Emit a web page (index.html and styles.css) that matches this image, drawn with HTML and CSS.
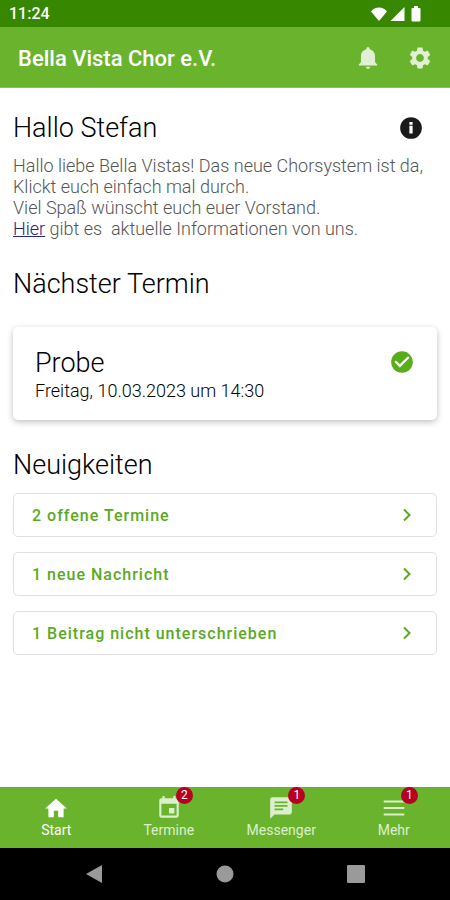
FILE: index.html
```html
<!DOCTYPE html>
<html lang="de">

<head>
    <meta charset="UTF-8">
    <meta name="viewport" content="width=device-width, initial-scale=1.0">
    <title>Bella Vista Chor e.V.</title>
    <link rel="stylesheet" href="styles.css">
</head>

<body>
    <!-- Status bar -->
    <div class="status-bar">
        <span class="time">11:24</span>
        <div class="status-icons">
            <svg width="18" height="16" viewBox="0 0 18 16"><path d="M9 15 1 5.500C3 3 6 1.500 9 1.500s6 1.500 8 4z" /></svg>
            <svg width="15" height="16" viewBox="0 0 15 16"><path d="M14.500 1v14H.5z" /></svg>
            <svg width="10" height="16" viewBox="0 0 10 16"><path d="M3 0h4v2h1.500q1 0 1 1v11q0 1.500-1 1.500h-7q-1 0-1-1.500V3q0-1 1-1H3z" /></svg>
        </div>
    </div>

    <!-- App bar -->
    <header class="app-bar">
        <div class="app-title">Bella Vista Chor e.V.</div>
        <button class="icon-button" aria-label="Benachrichtigungen">
            <svg width="26" height="26" viewBox="0 0 24 24"><path d="M12 22c1.100 0 2-.9 2-2h-4c0 1.100.9 2 2 2zm6.500-6v-5.500c0-3.200-1.900-5.800-5-6.500V3.300c0-.8-.7-1.500-1.500-1.500s-1.500.7-1.500 1.500V4c-3.100.7-5 3.300-5 6.500V16L3.500 18v1h17v-1z" /></svg>
        </button>
        <button class="icon-button" aria-label="Einstellungen">
            <svg width="26" height="26" viewBox="0 0 24 24"><path d="M19.140 12.940c.04-.3.06-.61.06-.94 0-.32-.02-.64-.07-.94l2.030-1.580c.18-.14.23-.41.12-.61l-1.920-3.320c-.12-.22-.37-.29-.59-.22l-2.390.96c-.5-.38-1.030-.7-1.620-.94l-.36-2.540c-.04-.24-.24-.41-.48-.41h-3.840c-.24 0-.43.17-.47.41l-.36 2.540c-.59.24-1.130.57-1.620.94l-2.390-.96c-.22-.08-.47 0-.59.22L2.740 8.870c-.12.21-.08.47.12.61l2.030 1.580c-.05.3-.09.63-.09.94s.02.64.07.94l-2.030 1.580c-.18.14-.23.41-.12.61l1.920 3.320c.12.22.37.29.59.22l2.390-.96c.5.38 1.030.7 1.620.94l.36 2.540c.05.24.24.41.48.41h3.840c.24 0 .44-.17.47-.41l.36-2.540c.59-.24 1.130-.56 1.620-.94l2.390.96c.22.08.47 0 .59-.22l1.920-3.320c.12-.22.07-.47-.12-.61zM12 15.600c-1.980 0-3.600-1.620-3.600-3.600s1.620-3.600 3.600-3.600 3.600 1.620 3.600 3.600-1.620 3.600-3.600 3.600z" /></svg>
        </button>
    </header>

    <main>
        <section class="welcome">
            <div class="heading-row">
                <h1>Hallo Stefan</h1>
                <button class="info-button" aria-label="Info">
                    <svg width="26" height="26" viewBox="0 0 24 24"><path d="M12 2a10 10 0 1 0 0 20 10 10 0 0 0 0-20zm1.500 15h-3v-7h3zm0-8h-3V6.500h3z" /></svg>
                </button>
            </div>
            <p>Hallo liebe Bella Vistas! Das neue Chorsystem ist da, Klickt euch einfach mal durch.<br>
                Viel Spaß wünscht euch euer Vorstand.<br>
                <a href="#">Hier</a> gibt es&nbsp; aktuelle Informationen von uns.</p>
        </section>

        <section>
            <h2>Nächster Termin</h2>
            <div class="card">
                <div>
                    <h3>Probe</h3>
                    <div class="date">Freitag, 10.03.2023 um 14:30</div>
                </div>
                <svg class="check" width="26" height="26" viewBox="0 0 24 24"><path d="M12 2C6.480 2 2 6.480 2 12s4.480 10 10 10 10-4.480 10-10S17.520 2 12 2zm-2 15-5-5 1.410-1.410L10 14.170l7.590-7.590L19 8z" /></svg>
            </div>
        </section>

        <section>
            <h2>Neuigkeiten</h2>
            <div class="news">
                <button>2 offene Termine
                    <svg width="10" height="14" viewBox="0 0 10 14"><path d="M2 1.500 7.500 7 2 12.500" /></svg>
                </button>
                <button>1 neue Nachricht
                    <svg width="10" height="14" viewBox="0 0 10 14"><path d="M2 1.500 7.500 7 2 12.500" /></svg>
                </button>
                <button>1 Beitrag nicht unterschrieben
                    <svg width="10" height="14" viewBox="0 0 10 14"><path d="M2 1.500 7.500 7 2 12.500" /></svg>
                </button>
            </div>
        </section>
    </main>

    <!-- Bottom navigation -->
    <nav class="tabs">
        <a href="#" class="active">
            <span class="tab-icon">
                <svg width="26" height="26" viewBox="0 0 24 24"><path d="M10 20.500v-6h4v6h5v-8h3L12 3.500l-10 9h3v8z" /></svg>
            </span>
            Start
        </a>
        <a href="#">
            <span class="tab-icon">
                <svg width="26" height="26" viewBox="0 0 24 24"><path d="M17 12h-5v5h5zM16 1v2H8V1H6v2H5c-1.110 0-2 .9-2 2v14c0 1.100.89 2 2 2h14c1.100 0 2-.9 2-2V5c0-1.100-.9-2-2-2h-1V1zm3 18H5V8h14z" /></svg>
                <span class="badge">2</span>
            </span>
            Termine
        </a>
        <a href="#">
            <span class="tab-icon">
                <svg width="26" height="26" viewBox="0 0 24 24"><path d="M20 2H4c-1.100 0-2 .9-2 2v18l4-4h14c1.100 0 2-.9 2-2V4c0-1.100-.9-2-2-2zM6 6h12v1.500H6zm8 8H6v-1.500h8zm4-3.200H6V9.300h12z" /></svg>
                <span class="badge">1</span>
            </span>
            Messenger
        </a>
        <a href="#">
            <span class="tab-icon">
                <svg width="26" height="26" viewBox="0 0 24 24"><path d="M2.500 19h19v-2h-19zm0-6h19v-2h-19zm0-8v2h19V5z" /></svg>
                <span class="badge">1</span>
            </span>
            Mehr
        </a>
    </nav>

    <!-- System navigation -->
    <div class="system-bar">
        <button aria-label="Zurück">
            <svg width="18" height="18" viewBox="0 0 18 18"><path d="M17 0v18L1 9z" /></svg>
        </button>
        <button aria-label="Startbildschirm">
            <svg width="18" height="18" viewBox="0 0 18 18"><circle cx="9" cy="9" r="8.500" /></svg>
        </button>
        <button aria-label="Übersicht">
            <svg width="18" height="18" viewBox="0 0 18 18"><rect width="18" height="18" rx="1" /></svg>
        </button>
    </div>
</body>

</html>
```
FILE: styles.css
```css
* {
    box-sizing: border-box;
}

body {
    font-family: Roboto, sans-serif;
    background-color: #ffffff;
    color: #1a1a1a;
    margin: 0;
    min-height: 100vh;
    display: flex;
    flex-direction: column;
}

button {
    font-family: inherit;
    background: none;
    border: none;
    padding: 0;
    cursor: pointer;
}

svg {
    display: block;
    fill: currentColor;
}

h1,
h2,
h3 {
    font-size: 27px;
    font-weight: 300;
    line-height: 32px;
    color: #000000;
    margin: 0;
}

.status-bar {
    display: flex;
    justify-content: space-between;
    align-items: center;
    height: 27px;
    padding: 0 29px 0 9px;
    background-color: #388700;
    color: #ffffff;
}

.time {
    font-size: 16px;
    font-weight: 500;
}

.status-icons {
    display: flex;
    gap: 2px;
}

.status-icons svg:last-child {
    margin-left: 4px;
}

.app-bar {
    display: flex;
    align-items: center;
    gap: 26px;
    height: 61px;
    padding: 2px 17px 0 18px;
    background-color: #6ab42d;
    border-bottom: 1px solid #87bf5c;
    color: #ffffff;
}

.app-title {
    flex: 1;
    font-size: 22px;
    font-weight: 500;
}

.icon-button {
    color: #e1f0d5;
}

main {
    flex: 1;
    padding: 24px 13px;
}

.heading-row {
    display: flex;
    justify-content: space-between;
    align-items: center;
    padding-right: 13px;
}

.info-button {
    color: #1a1a1a;
}

.welcome p {
    font-size: 18px;
    font-weight: 300;
    line-height: 21px;
    color: #555555;
    margin: 11px 0 29px;
}

.welcome a {
    color: #24247c;
}

.card {
    display: flex;
    justify-content: space-between;
    align-items: flex-start;
    margin: 27px 0 29px;
    padding: 20px 22px 17px;
    border-radius: 5px;
    box-shadow: 0 2px 6px rgba(0, 0, 0, 0.25);
}

.date {
    font-size: 18px;
    font-weight: 300;
    line-height: 24px;
    color: #000000;
}

.check {
    color: #58ad1a;
    margin-top: 2px;
}

.news {
    display: flex;
    flex-direction: column;
    gap: 15px;
    margin-top: 12px;
}

.news button {
    display: flex;
    justify-content: space-between;
    align-items: center;
    height: 44px;
    padding: 0 24px 0 18px;
    border: 1px solid #e0e0e0;
    border-radius: 5px;
    color: #5aaa1e;
    font-size: 16px;
    font-weight: 500;
    letter-spacing: 1px;
}

.news svg {
    fill: none;
    stroke: currentColor;
    stroke-width: 2;
}

.tabs {
    display: grid;
    grid-template-columns: repeat(4, 1fr);
    height: 61px;
    padding-top: 8px;
    background-color: #6ab42d;
}

.tabs a {
    display: flex;
    flex-direction: column;
    align-items: center;
    font-size: 14px;
    line-height: 18px;
    color: #dcefcd;
    text-decoration: none;
}

.tabs .active {
    color: #ffffff;
}

.tab-icon {
    position: relative;
}

.badge {
    position: absolute;
    top: -8px;
    right: -11px;
    width: 17px;
    height: 17px;
    border-radius: 50%;
    background-color: #b50022;
    color: #ffffff;
    font-size: 12px;
    line-height: 17px;
    text-align: center;
}

.system-bar {
    display: grid;
    grid-template-columns: repeat(3, 1fr);
    place-items: center;
    height: 52px;
    padding: 0 29px;
    background-color: #000000;
}

.system-bar button {
    color: #9a9a9a;
}
```
